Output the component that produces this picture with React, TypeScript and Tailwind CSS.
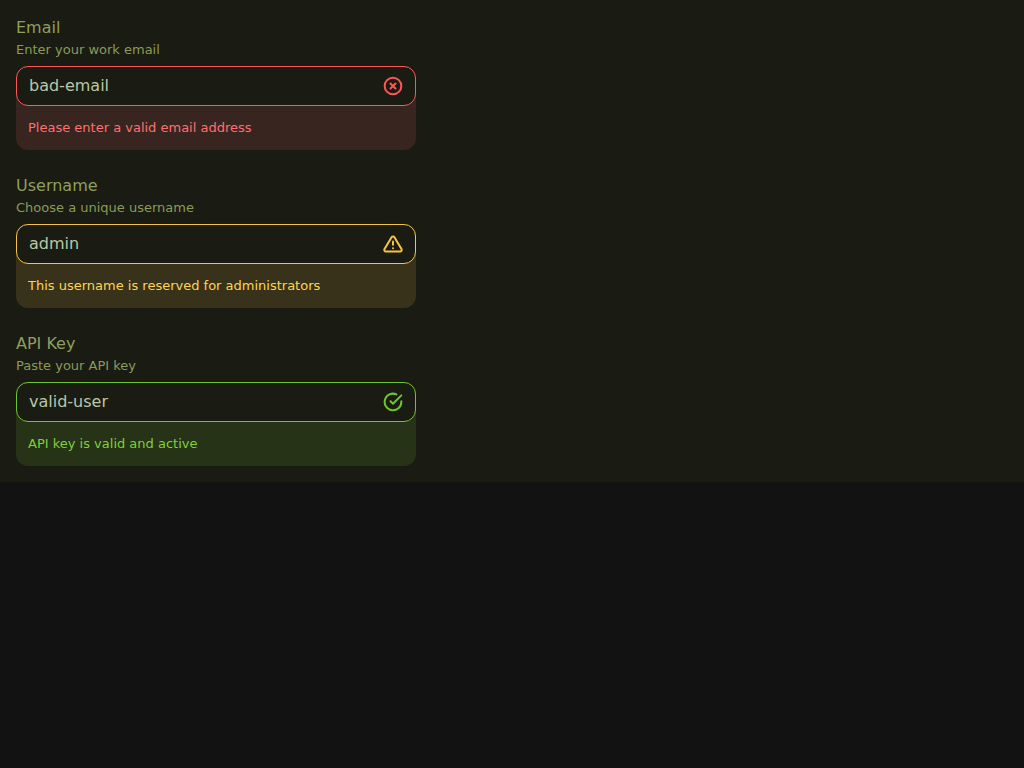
import { FiAlertTriangle, FiCheckCircle, FiXCircle } from "react-icons/fi"
import type { ReactNode } from "react"

type FieldProps = {
  label: string
  hint: string
  value: string
  message: string
  border: string
  panel: string
  text: string
  icon: ReactNode
}

function Field({ label, hint, value, message, border, panel, text, icon }: FieldProps) {
  return (
    <div className="w-[400px]">
      <div className="pt-px text-base leading-[22px] text-[#8f9f5f]">{label}</div>
      <div className="mt-px mb-1.5 text-[13px] leading-5 text-[#8a9a5b]">{hint}</div>
      <div className={`rounded-xl ${panel}`}>
        <div className={`flex h-10 items-center justify-between rounded-xl border bg-[#1a1b12] pl-3 pr-[12px] ${border}`}>
          <span className="text-base text-[#b8c8a8]">{value}</span>
          {icon}
        </div>
        <div className={`flex h-11 items-center px-3 text-[13px] ${text}`}>{message}</div>
      </div>
    </div>
  )
}

export default function App() {
  return (
    <div className="min-h-screen bg-[#121212] font-['DejaVu_Sans',sans-serif]">
      <div className="flex flex-col gap-6 bg-[#1a1b12] p-4">
        <Field
          label="Email"
          hint="Enter your work email"
          value="bad-email"
          message="Please enter a valid email address"
          border="border-[#ff5555]"
          panel="bg-[#382520]"
          text="text-[#ff7070]"
          icon={<FiXCircle size={20} strokeWidth={2.4} className="text-[#ff5555]" />}
        />
        <Field
          label="Username"
          hint="Choose a unique username"
          value="admin"
          message="This username is reserved for administrators"
          border="border-[#f5c542]"
          panel="bg-[#38321a]"
          text="text-[#ffd452]"
          icon={<FiAlertTriangle size={20} strokeWidth={2.4} className="text-[#f5c542]" />}
        />
        <Field
          label="API Key"
          hint="Paste your API key"
          value="valid-user"
          message="API key is valid and active"
          border="border-[#6cc52e]"
          panel="bg-[#263316]"
          text="text-[#7ed03a]"
          icon={<FiCheckCircle size={20} strokeWidth={2.4} className="text-[#6cc52e]" />}
        />
      </div>
    </div>
  )
}
